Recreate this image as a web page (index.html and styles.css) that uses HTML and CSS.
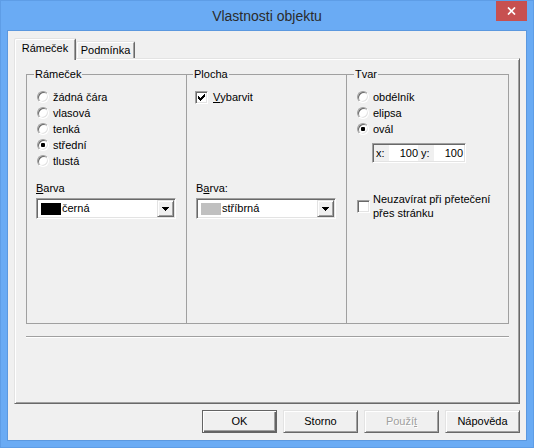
FILE: index.html
```html
<!DOCTYPE html>
<html lang="cs">
<head>
<meta charset="utf-8">
<title>Vlastnosti objektu</title>
<link rel="stylesheet" href="styles.css">
</head>
<body>
<div class="window">
  <div class="titlebar">
    <div class="title">Vlastnosti objektu</div>
    <div class="close"><svg width="9" height="8" viewBox="0 0 9 8"><path d="M1 0.5 L8 7.5 M8 0.5 L1 7.5" stroke="#fff" stroke-width="1.7" fill="none"/></svg></div>
  </div>
  <div class="client">
    <div class="tabs">
      <div class="tab selected">Rámeček</div>
      <div class="tab">Podmínka</div>
    </div>
    <div class="panel">
      <div class="groups">
        <fieldset class="grp g1">
          <legend>Rámeček</legend>
          <div class="opts">
            <div class="row"><span class="radio"></span>žádná čára</div>
            <div class="row"><span class="radio"></span>vlasová</div>
            <div class="row"><span class="radio"></span>tenká</div>
            <div class="row"><span class="radio on"></span>střední</div>
            <div class="row"><span class="radio"></span>tlustá</div>
          </div>
          <div class="lbl"><u>B</u>arva</div>
          <div class="combo"><span class="swatch black"></span><span class="ctext">černá</span><span class="cbtn"><svg width="7" height="4" viewBox="0 0 7 4"><path d="M0 0h7v1H0zM1 1h5v1H1zM2 2h3v1H2zM3 3h1v1H3z" fill="#000"/></svg></span></div>
        </fieldset>
        <fieldset class="grp g2">
          <legend>Plocha</legend>
          <div class="opts">
            <div class="row"><span class="check on"><svg width="7" height="7" viewBox="0 0 7 7"><path d="M6 0h1v1H6zM5 1h2v1H5zM0 2h1v1H0zM4 2h3v1H4zM0 3h2v1H0zM3 3h3v1H3zM0 4h5v1H0zM1 5h3v1H1zM2 6h1v1H2z" fill="#000"/></svg></span><u>V</u>ybarvit</div>
          </div>
          <div class="lbl">B<u>a</u>rva:</div>
          <div class="combo"><span class="swatch silver"></span><span class="ctext">stříbrná</span><span class="cbtn"><svg width="7" height="4" viewBox="0 0 7 4"><path d="M0 0h7v1H0zM1 1h5v1H1zM2 2h3v1H2zM3 3h1v1H3z" fill="#000"/></svg></span></div>
        </fieldset>
        <fieldset class="grp g3">
          <legend>Tvar</legend>
          <div class="row"><span class="radio"></span>obdélník</div>
          <div class="row"><span class="radio"></span>elipsa</div>
          <div class="row"><span class="radio on"></span>ovál</div>
          <div class="xy">
            <span class="xl">x:</span><span class="xf">100</span><span class="yl">y:</span><span class="yf">100</span>
          </div>
          <div class="chkrow"><span class="check"></span><span class="chktext">Neuzavírat při přetečení<br>přes stránku</span></div>
        </fieldset>
      </div>
      <div class="sep"></div>
    </div>
    <div class="buttons">
      <button class="btn default">OK</button>
      <button class="btn">Storno</button>
      <button class="btn disabled">Použí<u>t</u></button>
      <button class="btn">Nápověda</button>
    </div>
  </div>
</div>
</body>
</html>
```

FILE: styles.css
```css
* { box-sizing: border-box; }
html, body { margin: 0; padding: 0; }
body {
  width: 534px;
  height: 448px;
  overflow: hidden;
  font-family: "Liberation Sans", Arial, sans-serif;
  font-size: 11px;
  line-height: 13px;
  color: #000;
}
.window {
  width: 534px;
  height: 448px;
  background: #6aabf4;
  border: 1px solid #5e9de6;
  display: flex;
  flex-direction: column;
}
.titlebar {
  height: 30px;
  display: grid;
  grid-template-columns: 1fr auto 1fr;
}
.title {
  grid-column: 2;
  font-size: 14px;
  line-height: 30px;
  color: #2b2b2b;
  white-space: nowrap;
}
.close {
  grid-column: 3;
  justify-self: end;
  width: 31px;
  height: 20px;
  margin-right: 6px;
  background: #c75050;
  display: flex;
  align-items: center;
  justify-content: center;
}
.close svg { display: block; }
.client {
  margin: 0 7px 7px;
  height: 409px;
  background: #f0f0f0;
  box-shadow: 0 0 0 1px #5b98df;
  padding: 7px 6px 7px;
  display: flex;
  flex-direction: column;
}
.tabs {
  display: flex;
  align-items: flex-end;
  height: 20px;
}
.tab {
  width: 59px;
  height: 17px;
  border: 1px solid;
  border-bottom: 0;
  border-color: #e3e3e3 #696969 transparent #e3e3e3;
  box-shadow: inset 1px 1px #fff, inset -1px 0 #a0a0a0;
  border-radius: 2px 2px 0 0;
  padding-top: 2px;
  text-align: center;
  white-space: nowrap;
  background: #f0f0f0;
}
.tab.selected {
  width: 62px;
  height: 22px;
  padding-top: 3px;
  margin-bottom: -2px;
  position: relative;
  z-index: 2;
}
.panel {
  height: 346px;
  border: 1px solid;
  border-color: #e3e3e3 #696969 #696969 #e3e3e3;
  box-shadow: inset 1px 1px #fff, inset -1px -1px #a0a0a0;
  padding: 9px 0 0 11px;
}
.groups { display: flex; }
.grp {
  margin: 0;
  min-width: 0;
  height: 256px;
  border: 1px solid #a0a0a0;
  padding: 8px 0 0 9px;
}
.grp legend {
  padding: 0 1px;
  margin-left: -3px;
  font-size: 11px;
  line-height: 13px;
}
.g1 { width: 161px; }
.g1 legend { margin-left: -2px; }
.g2 { width: 161px; margin-left: -1px; }
.g3 { width: 163px; margin-left: -1px; padding-left: 10px; }
.opts { height: 93px; }
.row {
  display: flex;
  align-items: center;
  height: 16px;
  white-space: nowrap;
}
.g1 .row { margin-left: 1px; }
.radio {
  width: 12px;
  height: 12px;
  flex: none;
  border-radius: 50%;
  border: 1px solid;
  border-color: #a0a0a0 #fff #fff #a0a0a0;
  box-shadow: inset 1px 1px #696969, inset -1px -1px #e3e3e3;
  background: #fff;
  margin-right: 4px;
  display: flex;
  align-items: center;
  justify-content: center;
}
.radio.on::after {
  content: "";
  width: 4px;
  height: 4px;
  border-radius: 1px;
  background: #000;
}
.check {
  width: 13px;
  height: 13px;
  flex: none;
  border: 1px solid;
  border-color: #a0a0a0 #fff #fff #a0a0a0;
  box-shadow: inset 1px 1px #696969, inset -1px -1px #e3e3e3;
  background: #fff;
  display: flex;
  align-items: center;
  justify-content: center;
}
.check svg { display: block; }
.g2 .check { margin-left: -1px; margin-right: 5px; }
.lbl { height: 13px; white-space: nowrap; }
.combo {
  margin-top: 3px;
  width: 140px;
  height: 21px;
  border: 1px solid;
  border-color: #a0a0a0 #fff #fff #a0a0a0;
  box-shadow: inset 1px 1px #696969, inset -1px -1px #e3e3e3;
  background: #fff;
  padding: 1px;
  display: flex;
  align-items: center;
}
.swatch {
  width: 20px;
  height: 12px;
  margin-left: 3px;
  margin-right: 1px;
  flex: none;
}
.swatch.black { background: #000; }
.swatch.silver { background: #c0c0c0; }
.ctext { white-space: nowrap; }
.cbtn {
  margin-left: auto;
  width: 17px;
  height: 17px;
  flex: none;
  border: 1px solid;
  border-color: #e3e3e3 #696969 #696969 #e3e3e3;
  box-shadow: inset 1px 1px #fff, inset -1px -1px #a0a0a0;
  background: #f0f0f0;
  display: flex;
  align-items: center;
  justify-content: center;
}
.cbtn svg { display: block; margin-top: 1px; }
.xy {
  margin: 6px 0 0 15px;
  width: 94px;
  height: 20px;
  border: 1px solid;
  border-color: #a0a0a0 #fff #fff #a0a0a0;
  box-shadow: inset 1px 1px #696969, inset -1px -1px #e3e3e3;
  background: #f0f0f0;
  padding: 1px;
  display: flex;
  line-height: 16px;
}
.xl { width: 15px; padding-left: 2px; }
.xf { width: 29px; background: #fff; text-align: right; padding-right: 0; }
.yl { width: 16px; padding-left: 3px; }
.yf { width: 30px; background: #fff; text-align: right; padding-right: 1px; }
.chkrow {
  margin-top: 29px;
  display: flex;
  align-items: center;
}
.chkrow .check { margin-right: 3px; }
.chktext { line-height: 14px; white-space: nowrap; }
.sep {
  width: 483px;
  height: 2px;
  margin-top: 12px;
  border-top: 1px solid #a0a0a0;
  border-bottom: 1px solid #fff;
}
.buttons {
  display: flex;
  justify-content: flex-end;
  gap: 6px;
  margin-top: 6px;
}
.btn {
  width: 75px;
  height: 23px;
  margin: 0;
  padding: 0 0 1px;
  font: inherit;
  color: #000;
  background: #f0f0f0;
  border: 1px solid;
  border-color: #e3e3e3 #696969 #696969 #e3e3e3;
  box-shadow: inset 1px 1px #fff, inset -1px -1px #a0a0a0;
  border-radius: 0;
}
.btn.default {
  border-color: #646464;
  box-shadow: inset 1px 1px #fff, inset -1px -1px #646464, inset -2px -2px #a0a0a0;
}
.btn.disabled {
  color: #a0a0a0;
  text-shadow: 1px 1px 0 #fff;
}
```
